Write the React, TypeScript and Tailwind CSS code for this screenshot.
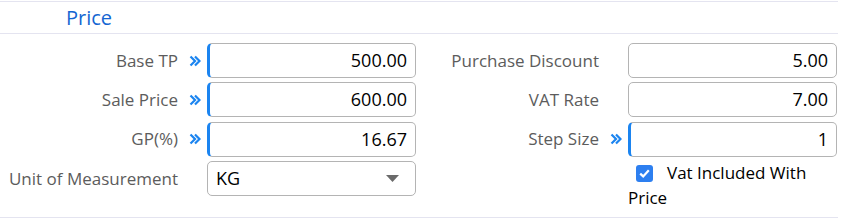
import React from 'react';

const font = { fontFamily: '"Open Sans", "DejaVu Sans", sans-serif' };

const Chevrons = () => (
  <svg width="12" height="12" viewBox="0 0 12 12" className="text-[#1b84f0]">
    <path d="M1.5 1.5 L6 6 L1.5 10.5" fill="none" stroke="currentColor" strokeWidth="2.2" />
    <path d="M6 1.5 L10.5 6 L6 10.5" fill="none" stroke="currentColor" strokeWidth="2.2" />
  </svg>
);

interface FieldProps {
  label: string;
  value: string;
  marked?: boolean;
}

const Field: React.FC<FieldProps> = ({ label, value, marked = false }) => (
  <>
    <div className="text-right text-[17px] text-[#5c5c5c] whitespace-nowrap">{label}</div>
    <div className="flex items-center justify-center pl-[4px]">{marked && <Chevrons />}</div>
    <div
      className={
        marked
          ? 'h-[35px] flex items-center justify-end pr-[8px] rounded-[5px] border border-[#b4b4b4] border-l-[3px] border-l-[#1b84f0] text-[18px] text-black bg-white'
          : 'h-[35px] flex items-center justify-end pr-[8px] rounded-[5px] border border-[#b4b4b4] text-[18px] text-black bg-white'
      }
    >
      {value}
    </div>
  </>
);

export default function App() {
  return (
    <div className="bg-white w-[856px] h-[220px] pt-px" style={font}>
      <div className="w-[838px] border-t border-b border-[#e4e4f0]">
        <div className="h-[32px] flex items-center pl-[66px] border-b border-[#e4e4f0] text-[20px] text-[#1466d2]">
          Price
        </div>
        <div className="h-[183px] flex items-start pt-[9px]">
          <div className="w-[421px] grid grid-cols-[178px_29px_209px] grid-rows-[35px_35px_35px_35px] gap-y-[4.3px] items-center">
            <Field label="Base TP" value="500.00" marked />
            <Field label="Sale Price" value="600.00" marked />
            <Field label="GP(%)" value="16.67" marked />
            <div className="text-right text-[17px] text-[#5c5c5c] whitespace-nowrap">Unit of Measurement</div>
            <div />
            <div className="h-[35px] flex items-center justify-between pl-[8px] pr-[16px] rounded-[5px] border border-[#b4b4b4] text-[18px] text-black bg-white">
              <span>KG</span>
              <svg width="13" height="7" viewBox="0 0 13 7">
                <path d="M0 0 H13 L6.5 7 Z" fill="#6a6a6a" />
              </svg>
            </div>
          </div>
          <div className="w-[417px] grid grid-cols-[178px_29px_209px] grid-rows-[35px_35px_35px_auto] gap-y-[4.3px] items-center">
            <Field label="Purchase Discount" value="5.00" />
            <Field label="VAT Rate" value="7.00" />
            <Field label="Step Size" value="1" marked />
            <div />
            <div />
            <div className="text-[17px] leading-[25px] text-black -mt-[1px] self-start">
              <span className="inline-flex align-middle w-[17px] h-[17px] ml-[8px] mr-[14px] rounded-[3px] bg-[#2d7ff0] items-center justify-center relative -top-[1px]">
                <svg width="11" height="9" viewBox="0 0 11 9">
                  <path d="M1.2 4.6 L4.2 7.4 L9.8 1.3" fill="none" stroke="white" strokeWidth="2.2" />
                </svg>
              </span>
              Vat Included With Price
            </div>
          </div>
        </div>
      </div>
    </div>
  );
}
